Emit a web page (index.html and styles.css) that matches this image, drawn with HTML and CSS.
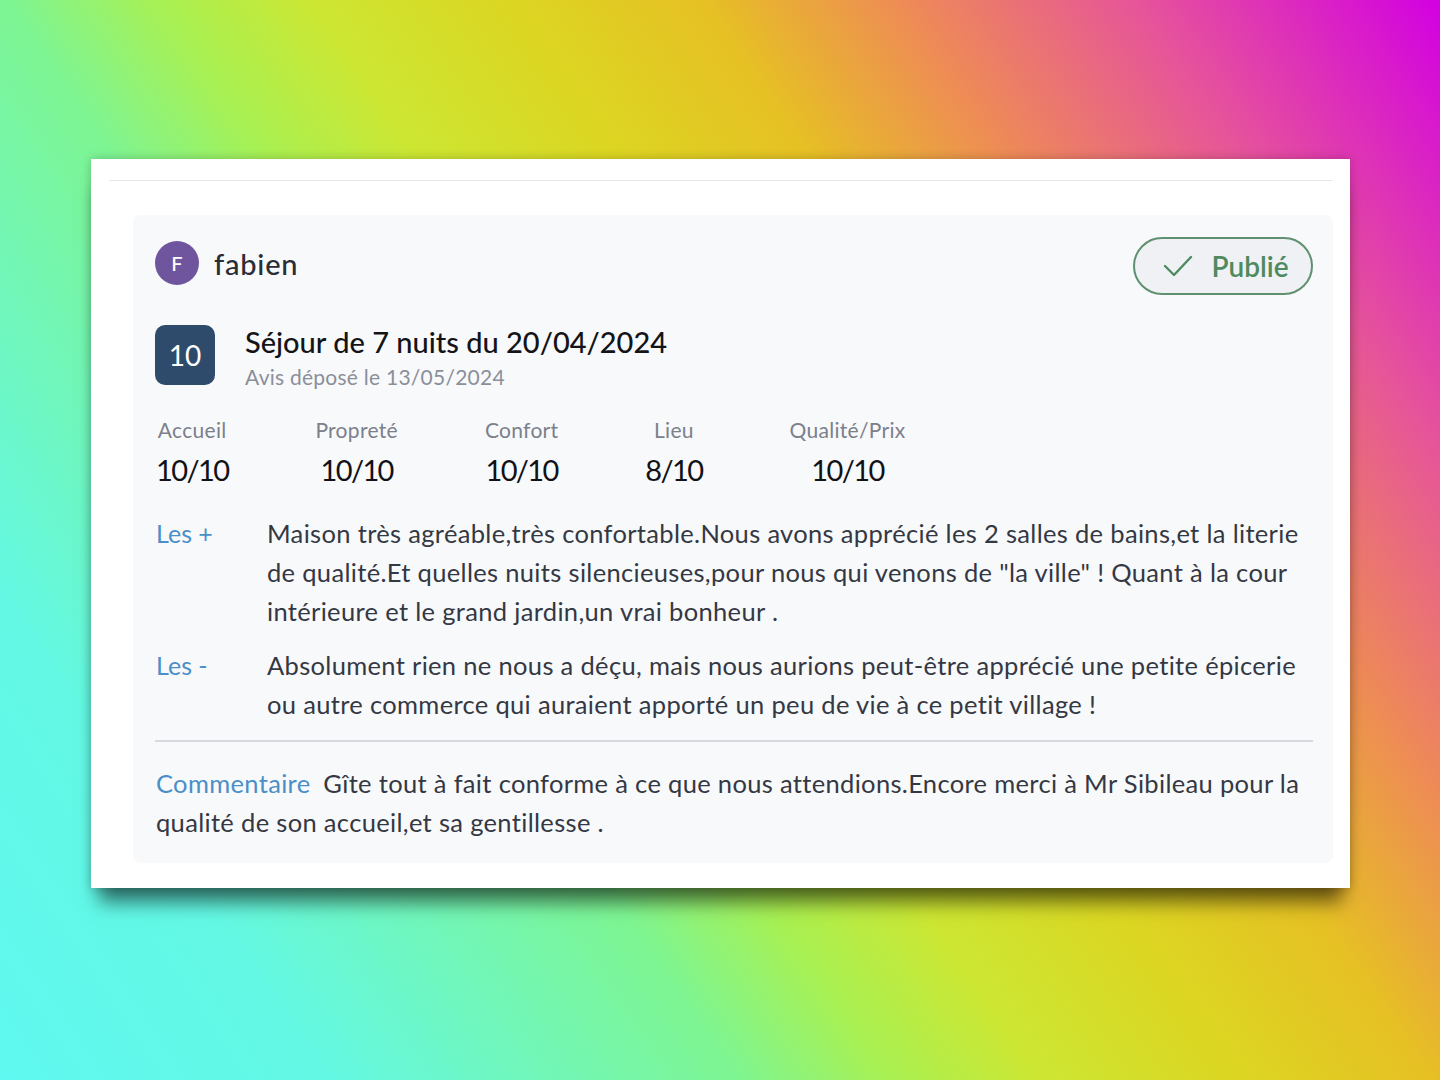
FILE: index.html
```html
<!DOCTYPE html>
<html lang="fr">
<head>
<meta charset="utf-8">
<title>Avis</title>
<link rel="stylesheet" href="styles.css">
</head>
<body>
<div class="card">
  <div class="rule"></div>
  <div class="panel">
    <div class="head">
      <div class="user">
        <div class="avatar">F</div>
        <div class="name">fabien</div>
      </div>
      <div class="pill">
        <svg class="check" width="30" height="24" viewBox="0 0 30 24"><path d="M2 12 L11 21 L28 3" fill="none" stroke="#4f8a5f" stroke-width="2.4" stroke-linecap="round" stroke-linejoin="round"/></svg>
        <span>Publié</span>
      </div>
    </div>
    <div class="stay">
      <div class="score">10</div>
      <div class="stay-text">
        <div class="stay-title">Séjour de 7 nuits du 20/04/2024</div>
        <div class="stay-sub">Avis déposé le 13/05/2024</div>
      </div>
    </div>
    <div class="ratings">
      <div class="rating"><div class="r-label">Accueil</div><div class="r-val">10/10</div></div>
      <div class="rating"><div class="r-label">Propreté</div><div class="r-val">10/10</div></div>
      <div class="rating"><div class="r-label">Confort</div><div class="r-val">10/10</div></div>
      <div class="rating"><div class="r-label">Lieu</div><div class="r-val">8/10</div></div>
      <div class="rating"><div class="r-label">Qualité/Prix</div><div class="r-val">10/10</div></div>
    </div>
    <div class="pc plus">
      <div class="pc-label">Les +</div>
      <div class="pc-text">Maison très agréable,très confortable.Nous avons apprécié les 2 salles de bains,et la literie<br>de qualité.Et quelles nuits silencieuses,pour nous qui venons de "la ville" ! Quant à la cour<br>intérieure et le grand jardin,un vrai bonheur .</div>
    </div>
    <div class="pc minus">
      <div class="pc-label">Les -</div>
      <div class="pc-text">Absolument rien ne nous a déçu, mais nous aurions peut-être apprécié une petite épicerie<br>ou autre commerce qui auraient apporté un peu de vie à ce petit village !</div>
    </div>
    <div class="divider"></div>
    <div class="comment"><span class="c-label">Commentaire</span> Gîte tout à fait conforme à ce que nous attendions.Encore merci à Mr Sibileau pour la<br>qualité de son accueil,et sa gentillesse .</div>
  </div>
</div>
</body>
</html>
```
FILE: styles.css
```css
* { box-sizing: border-box; }
html, body { margin: 0; padding: 0; }
body {
  width: 1440px;
  height: 1080px;
  overflow: hidden;
  font-family: "Lato", "Noto Sans", sans-serif;
  background: linear-gradient(56deg,
    #5ff8f0 0%, #63f8e4 15%, #7ef592 34%, #a8f052 41%, #cce632 48%,
    #dcd622 57%, #e6c024 66%, #ee8c55 75%, #e6549a 86%, #d200e2 100%);
  padding: 159px 0 0 91px;
}
.card {
  width: 1259px;
  background: #ffffff;
  padding: 21px 18px 25px 18px;
  box-shadow: 0 0 10px rgba(0,0,0,0.22), 0 22px 18px -8px rgba(0,0,0,0.55);
}
.rule { height: 1px; background: #e4e6ea; }
.panel {
  margin: 34px 0 0 24px;
  width: 1200px;
  background: #f8f9fb;
  border-radius: 8px;
  padding: 22px 20px 21px 22px;
  color: #343843;
}
.head { display: flex; justify-content: space-between; align-items: flex-start; }
.user { display: flex; align-items: center; margin-top: 4px; gap: 15px; }
.avatar {
  width: 44px; height: 44px; border-radius: 50%;
  background: #6e559e; color: #fff;
  display: flex; align-items: center; justify-content: center;
  font-size: 20px; font-weight: 500;
}
.name { font-size: 29px; letter-spacing: 0.8px; font-weight: 500; color: #2a2d36; }
.pill {
  width: 180px; height: 58px;
  border: 2px solid #5f9070; border-radius: 29px;
  background: #eff1f4;
  display: flex; align-items: center; justify-content: center; gap: 18px;
  color: #4f8a5f; font-size: 28px; font-weight: 600;
  padding-left: 6px;
}
.stay { display: flex; align-items: flex-start; gap: 30px; margin-top: 30px; }
.score {
  width: 60px; height: 60px; border-radius: 10px;
  background: #2f4b6b; color: #fff;
  display: flex; align-items: center; justify-content: center;
  font-size: 28px;
}
.stay-title { font-size: 29px; line-height: 34px; color: #141418; font-weight: 500; }
.stay-sub { font-size: 21px; letter-spacing: 0.25px; line-height: 26px; color: #8a8f9a; margin-top: 5px; }
.ratings { display: flex; gap: 87px; margin-top: 27px; padding-left: 1px; }
.rating { text-align: center; }
.r-label { font-size: 21px; letter-spacing: 0.3px; line-height: 26px; color: #7b808b; }
.r-val { font-size: 29px; letter-spacing: -1.6px; line-height: 34px; color: #111216; margin-top: 10px; }
.pc { display: flex; font-size: 25.5px; letter-spacing: 0.33px; line-height: 39px; margin-top: 27px; }
.pc.minus { margin-top: 15px; }
.pc-label { width: 112px; flex: none; color: #4a8fc8; padding-left: 1px; letter-spacing: 0; font-size: 25px; }
.pc-text { flex: 1; }
.divider { height: 2px; background: #d6d9de; margin-top: 16px; }
.comment { font-size: 25.5px; letter-spacing: 0.33px; line-height: 39px; margin-top: 22px; padding-left: 1px; }
.c-label { color: #4a8fc8; margin-right: 6px; }
```
